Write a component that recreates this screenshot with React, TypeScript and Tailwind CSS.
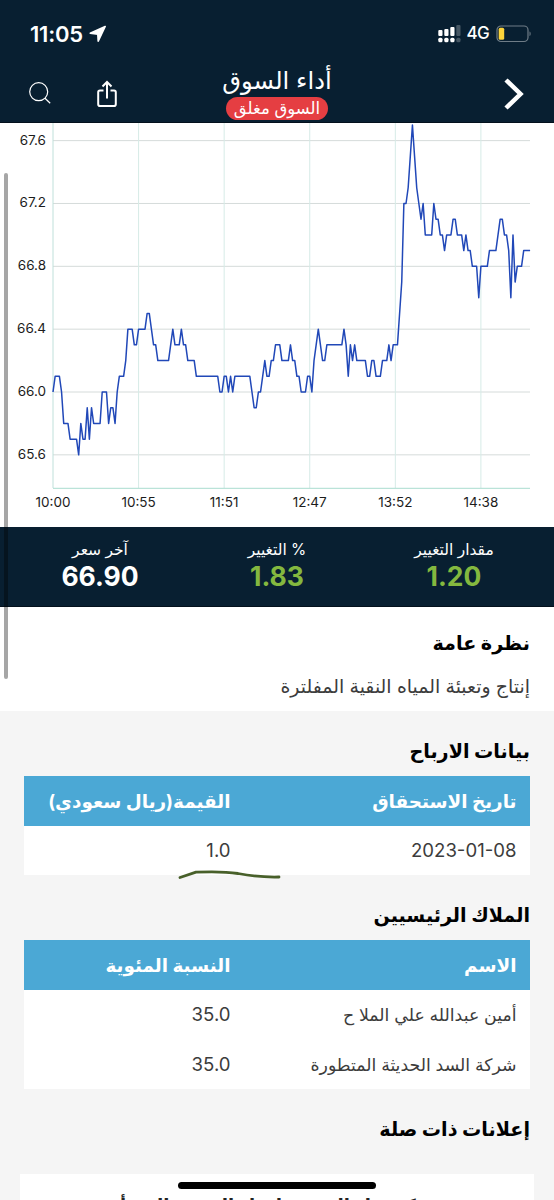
import type { ReactNode } from "react";

// [minute index, price]
const prices = [
  [0, 66.0], [1, 66.1], [3, 66.1], [4, 66.0], [5, 65.8], [7, 65.8], [8, 65.7],
  [11, 65.7], [12, 65.6], [13, 65.8], [14, 65.7], [15, 65.7], [16, 65.9],
  [17, 65.7], [18, 65.9], [19, 65.8], [22, 65.8], [23, 66.0], [25, 66.0],
  [26, 65.8], [27, 65.9], [28, 65.9], [29, 65.8], [30, 66.0], [31, 66.1],
  [33, 66.1], [34, 66.2], [35, 66.4], [37, 66.4], [38, 66.3], [39, 66.3],
  [40, 66.4], [43, 66.4], [44, 66.5], [45, 66.5], [46, 66.4], [47, 66.3],
  [48, 66.3], [49, 66.2], [54, 66.2], [55, 66.3], [56, 66.4], [57, 66.3],
  [59, 66.3], [60, 66.4], [61, 66.3], [62, 66.3], [63, 66.2], [66, 66.2],
  [67, 66.1], [77, 66.1], [78, 66.0], [79, 66.0], [80, 66.1], [81, 66.1],
  [82, 66.0], [83, 66.1], [84, 66.0], [85, 66.1], [92, 66.1], [93, 66.0],
  [94, 65.9], [95, 65.9], [96, 66.0], [97, 66.0], [98, 66.1], [99, 66.2],
  [100, 66.1], [101, 66.1], [102, 66.2], [103, 66.2], [104, 66.3],
  [106, 66.3], [107, 66.2], [110, 66.2], [111, 66.3], [112, 66.2],
  [113, 66.2], [114, 66.1], [115, 66.1], [116, 66.0], [118, 66.0],
  [119, 66.1], [120, 66.1], [121, 66.0], [122, 66.2], [123, 66.3],
  [124, 66.4], [125, 66.3], [126, 66.2], [127, 66.2], [128, 66.3],
  [135, 66.3], [136, 66.4], [137, 66.3], [138, 66.1], [139, 66.3],
  [140, 66.2], [141, 66.3], [142, 66.2], [146, 66.2], [147, 66.1],
  [148, 66.1], [149, 66.2], [150, 66.2], [151, 66.1], [153, 66.1],
  [154, 66.2], [156, 66.2], [157, 66.3], [158, 66.2], [159, 66.3],
  [161, 66.3], [162, 66.5], [163, 66.7], [164, 67.2], [165, 67.2],
  [166, 67.3], [167, 67.5], [168, 67.7], [169, 67.5], [170, 67.3],
  [171, 67.2], [172, 67.1], [173, 67.2], [174, 67.0], [177, 67.0],
  [178, 67.2], [179, 67.1], [180, 67.1], [181, 67.0], [182, 67.0],
  [183, 66.9], [184, 67.0], [186, 67.0], [187, 67.1], [188, 67.1],
  [189, 67.0], [191, 67.0], [192, 66.9], [193, 67.0], [194, 66.9],
  [195, 66.9], [196, 66.8], [198, 66.8], [199, 66.6], [200, 66.8],
  [203, 66.8], [204, 66.9], [207, 66.9], [208, 67.0], [209, 67.1],
  [210, 67.1], [211, 67.0], [212, 67.0], [213, 66.9], [214, 66.6],
  [215, 67.0], [216, 66.7], [217, 66.8], [219, 66.8], [220, 66.9],
  [223, 66.9],
];

const yTicks = [67.6, 67.2, 66.8, 66.4, 66.0, 65.6];
const xTicks = ["10:00", "10:55", "11:51", "12:47", "13:52", "14:38"];

const toX = (i: number) => 53 + i * 2.1395;
const toY = (price: number) => 269 - (price - 66) * 157.1;

const isNumeric = (text: string) => /^[\d.-]+$/.test(text);

const StatusBar = () => (
  <div className="flex items-center justify-between h-[67px] pl-[30px] pr-[22px]">
    <div className="flex items-center gap-[6px]">
      <span className="text-[22px] font-semibold leading-none tracking-[-0.2px]">
        11:05
      </span>
      <svg width="18" height="18" viewBox="0 0 18 18" fill="currentColor" stroke="currentColor" strokeLinejoin="round">
        <path d="M16.200 1.500 1.200 8.200 8.800 9.200 9.200 16.200Z" strokeWidth="1.600" />
      </svg>
    </div>
    <div className="flex items-center">
      <svg width="24" height="18" viewBox="0 0 24 18" fill="white">
        <rect x="0.3" y="5" width="4.200" height="6" rx="1" />
        <rect x="6.3" y="4" width="4.200" height="7" rx="1" />
        <rect x="12.3" y="2" width="4.200" height="9" rx="1" />
        <rect x="18.3" y="0" width="4.200" height="11" rx="1" opacity=".25" />
        <rect x="0.3" y="12.700" width="4.200" height="4.500" rx="1.500" />
        <rect x="6.3" y="12.700" width="4.200" height="4.500" rx="1.500" />
        <rect x="12.3" y="12.700" width="4.200" height="4.500" rx="1.500" />
        <rect x="18.3" y="12.700" width="4.200" height="4.500" rx="1.500" opacity=".25" />
      </svg>
      <span className="text-[17px] font-medium leading-none ml-[5px] mr-[7px] tracking-[-0.7px]">
        4G
      </span>
      <svg width="36" height="18" viewBox="0 0 36 18" fill="none">
        <rect x="1" y="1" width="31" height="15.500" rx="4" stroke="#6f7c87" strokeWidth="1.200" />
        <rect x="2.700" y="2.700" width="5.500" height="12" rx="1.500" fill="#fbd33b" />
        <path d="M33.500 6.500v4.500c1.500-.5 1.500-4 0-4.500Z" fill="#6f7c87" />
      </svg>
    </div>
  </div>
);

const Header = () => (
  <header className="bg-[#081f31] text-white h-[123px] border-b border-[#03101c]">
    <StatusBar />
    <div dir="ltr" className="grid grid-cols-3 items-center h-[53px]">
      <div className="flex items-center pl-[29px]">
        <svg width="22" height="23" viewBox="0 0 22 23" fill="none" stroke="currentColor" strokeWidth="1.200">
          <circle cx="9.700" cy="9.700" r="9" />
          <path d="m16 16.200 5.200 5" />
        </svg>
        <svg className="ml-[46px]" width="20" height="28" viewBox="0 0 20 28" fill="none" stroke="currentColor" strokeWidth="2">
          <path d="M6.500 10.500H3a1.800 1.800 0 0 0-1.800 1.800v11.900A1.800 1.800 0 0 0 3 26h14a1.800 1.800 0 0 0 1.800-1.800V12.300a1.800 1.800 0 0 0-1.800-1.800h-3.500M10 18.500V2M5.500 6.500 10 2l4.500 4.500" />
        </svg>
      </div>
      <div dir="rtl" className="flex flex-col items-center">
        <h1 className="text-[24.2px] leading-[25px] pb-[4px] whitespace-nowrap">أداء السوق</h1>
        <span className="flex items-center justify-center w-[102px] h-[23px] rounded-full bg-[#e53e42] text-[16.5px] leading-none whitespace-nowrap">
          السوق مغلق
        </span>
      </div>
      <div className="flex justify-end pr-[29px]">
        <svg width="22" height="32" viewBox="0 0 22 32" fill="none" stroke="currentColor" strokeWidth="4.500">
          <path d="m3 2 14.500 14L3 30" />
        </svg>
      </div>
    </div>
  </header>
);

const PriceChart = () => (
  <svg
    direction="ltr"
    className="block"
    width="554"
    height="404"
    viewBox="0 0 554 404"
    fontSize="13.500"
    fill="#1c1c1c"
  >
    {yTicks.map((tick) => (
      <g key={tick}>
        <path d={`M53 ${toY(tick)}H530`} stroke="#d5dbda" />
        <text x="46" y={toY(tick) + 4} textAnchor="end">
          {tick.toFixed(1)}
        </text>
      </g>
    ))}
    {xTicks.map((tick, i) => (
      <g key={tick}>
        <path d={`M${toX(i * 40)} 0V365`} stroke={i === 0 ? "#bfe0da" : "#d6ebe7"} />
        <text x={toX(i * 40)} y="384" textAnchor="middle">
          {tick}
        </text>
      </g>
    ))}
    <path d="M53 365.300H530" stroke="#a9dccf" />
    <polyline
      points={prices.map(([i, price]) => `${toX(i)},${toY(price)}`).join(" ")}
      fill="none"
      stroke="#2148b8"
      strokeWidth="1.500"
      strokeLinejoin="round"
    />
  </svg>
);

const Stat = ({ label, value, color }: { label: string; value: string; color: string }) => (
  <div className="flex flex-col items-center pt-[13px]">
    <span className="text-[15.5px] leading-[20px] whitespace-nowrap">{label}</span>
    <span className={`text-[26.5px] font-bold leading-[32px] ${color}`}>{value}</span>
  </div>
);

const Title = ({ children }: { children: ReactNode }) => (
  <h2 className="text-[19.2px] leading-[28px] font-bold text-black">{children}</h2>
);

const Table = ({ head, rows }: { head: string[]; rows: string[][] }) => (
  <table className="w-full table-fixed bg-white text-[#3c3c3c]">
    <colgroup>
      <col className="w-[286px]" />
      <col />
    </colgroup>
    <thead className="bg-[#4ba8d5] text-white text-[18.4px]">
      <tr className="h-[49.5px]">
        {head.map((cell) => (
          <th key={cell} className="text-start pt-[2px] pr-[13.5px] font-bold whitespace-nowrap">
            {cell}
          </th>
        ))}
      </tr>
    </thead>
    <tbody>
      {rows.map((row) => (
        <tr key={row[0]} className="h-[49.5px]">
          {row.map((cell, i) => (
            <td
              key={i}
              className={`pt-[2px] pr-[13.5px] whitespace-nowrap ${isNumeric(cell) ? "text-[18.6px]" : "text-[17.3px]"}`}
            >
              {cell}
            </td>
          ))}
        </tr>
      ))}
    </tbody>
  </table>
);

export default function App() {
  return (
    <div className="relative w-[554px] h-[1200px] overflow-hidden bg-[#f5f5f5] font-['Inter','DejaVu_Sans',sans-serif]">
      <Header />
      <main dir="rtl">
        <div className="bg-white">
          <PriceChart />
          <div className="grid grid-cols-[200px_154px_200px] h-[80px] bg-[#081f31] text-white border-b border-[#03101c]">
            <Stat label="مقدار التغيير" value="1.20" color="text-[#84b83f]" />
            <Stat label="% التغيير" value="1.83" color="text-[#84b83f]" />
            <Stat label="آخر سعر" value="66.90" color="text-white" />
          </div>
          <section className="h-[104px] px-6 pt-[22px]">
            <Title>نظرة عامة</Title>
            <p className="mt-[16px] text-[18.9px] leading-[28px] text-[#3c3c3c]">
              إنتاج وتعبئة المياه النقية المفلترة
            </p>
          </section>
        </div>
        <section className="px-6 pt-[26px]">
          <Title>بيانات الارباح</Title>
          <div className="relative mt-[11px]">
            <Table
              head={["تاريخ الاستحقاق", "القيمة(ريال سعودي)"]}
              rows={[["2023-01-08", "1.0"]]}
            />
            {/* hand-drawn marker stroke under the value */}
            <svg className="absolute left-[154px] top-[92px]" width="104" height="14" viewBox="0 0 104 14" fill="none">
              <path d="M2 9.500 18 4.200Q44 3 60 5.500 80 9.500 101 9" stroke="#48602a" strokeWidth="2.800" strokeLinecap="round" strokeLinejoin="round" />
            </svg>
          </div>
        </section>
        <section className="px-6 pt-[26px]">
          <Title>الملاك الرئيسيين</Title>
          <div className="mt-[11px]">
            <Table
              head={["الاسم", "النسبة المئوية"]}
              rows={[
                ["أمين عبدالله علي الملا ح", "35.0"],
                ["شركة السد الحديثة المتطورة", "35.0"],
              ]}
            />
          </div>
        </section>
        <section className="pt-[26px]">
          <div className="px-6">
            <Title>إعلانات ذات صلة</Title>
          </div>
          <div className="mx-5 mt-[31px] h-[60px] bg-white pt-[18px] text-[18px] font-bold leading-[28px] text-[#222] text-center whitespace-nowrap">
            شركة مياه المنتجة لمياه الشرب المعبأة
          </div>
        </section>
      </main>
      <div className="absolute left-[4px] top-[173px] w-[4px] h-[506px] rounded-full bg-black/35" />
      <div className="absolute left-[178px] top-[1182px] w-[198px] h-[7px] rounded-full bg-black" />
    </div>
  );
}
